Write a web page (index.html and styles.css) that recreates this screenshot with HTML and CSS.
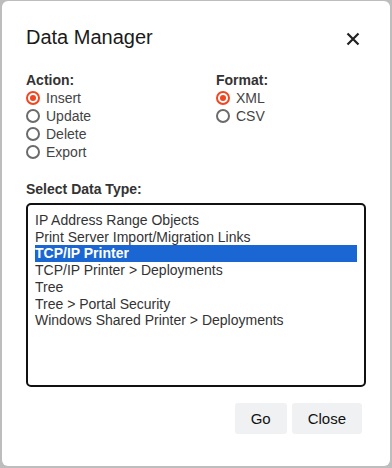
FILE: index.html
```html
<!DOCTYPE html>
<html lang="en">
<head>
  <meta charset="UTF-8">
  <meta name="viewport" content="width=device-width, initial-scale=1.0">
  <title>Data Manager</title>
  <link rel="stylesheet" href="styles.css">
</head>
<body>
  <div class="dialog">
    <div class="dialog-header">
      <h2>Data Manager</h2>
      <button class="close-x" aria-label="Close">
        <svg width="14" height="14" viewBox="0 0 14 14"><path d="M1.5 1.5 L12.5 12.5 M12.5 1.5 L1.5 12.5" stroke="#222" stroke-width="2.2" fill="none"/></svg>
      </button>
    </div>

    <div class="options">
      <div class="group">
        <div class="group-title">Action:</div>
        <label class="radio"><input type="radio" name="action" checked> Insert</label>
        <label class="radio"><input type="radio" name="action"> Update</label>
        <label class="radio"><input type="radio" name="action"> Delete</label>
        <label class="radio"><input type="radio" name="action"> Export</label>
      </div>
      <div class="group">
        <div class="group-title">Format:</div>
        <label class="radio"><input type="radio" name="format" checked> XML</label>
        <label class="radio"><input type="radio" name="format"> CSV</label>
      </div>
    </div>

    <div class="group-title">Select Data Type:</div>
    <div class="listbox">
      <div class="item">IP Address Range Objects</div>
      <div class="item">Print Server Import/Migration Links</div>
      <div class="item selected">TCP/IP Printer</div>
      <div class="item">TCP/IP Printer &gt; Deployments</div>
      <div class="item">Tree</div>
      <div class="item">Tree &gt; Portal Security</div>
      <div class="item">Windows Shared Printer &gt; Deployments</div>
    </div>

    <div class="footer">
      <button class="btn">Go</button>
      <button class="btn">Close</button>
    </div>
  </div>
</body>
</html>
```

FILE: styles.css
```css
body {
  margin: 0;
  padding: 1px 2px 2px 2px;
  background-color: #bdbdbd;
  font-family: "Liberation Sans", Arial, sans-serif;
  color: #222;
}

.dialog {
  background: #fff;
  border-radius: 6px;
  height: 465px;
  box-sizing: border-box;
  padding: 23px 24px 0 24px;
}

.dialog-header {
  display: flex;
  justify-content: space-between;
  align-items: center;
}

.dialog-header h2 {
  margin: 0;
  font-size: 20px;
  font-weight: normal;
  line-height: 26px;
  color: #1a1a1a;
}

.close-x {
  border: none;
  background: none;
  padding: 0;
  margin: 4px 6px 0 0;
  width: 14px;
  height: 14px;
  display: flex;
}

.options {
  display: flex;
  margin-top: 21px;
}

.group {
  width: 190px;
  flex-shrink: 0;
}

.group + .group {
  flex: 1;
  width: auto;
}

.group-title {
  font-size: 14px;
  font-weight: bold;
  color: #333;
  line-height: 18px;
}

.radio {
  display: flex;
  align-items: center;
  gap: 6px;
  font-size: 14px;
  line-height: 18px;
  color: #444;
}

.radio input {
  appearance: none;
  width: 14px;
  height: 14px;
  margin: 0;
  border: 2px solid #6b6b6b;
  border-radius: 50%;
  box-sizing: border-box;
  display: grid;
  place-items: center;
}

.radio input:checked {
  border-color: #f1461f;
}

.radio input:checked::after {
  content: "";
  width: 6px;
  height: 6px;
  border-radius: 50%;
  background: #f1461f;
}

.options + .group-title {
  margin-top: 19px;
}

.listbox {
  margin-top: 5px;
  height: 184px;
  border: 2px solid #111;
  border-radius: 5px;
  box-sizing: border-box;
  padding: 7px 7px 0 7px;
}

.item {
  font-size: 14px;
  line-height: 16.7px;
  color: #333;
  white-space: nowrap;
}

.item.selected {
  background: #1a66d2;
  color: #fff;
  font-weight: bold;
}

.footer {
  display: flex;
  justify-content: flex-end;
  gap: 5px;
  margin-top: 16px;
  padding-right: 4px;
}

.btn {
  border: none;
  border-radius: 3px;
  background: #f0f1f2;
  font-family: "Liberation Sans", Arial, sans-serif;
  font-size: 15px;
  color: #111;
  height: 31px;
  padding: 0 16px;
}
```
